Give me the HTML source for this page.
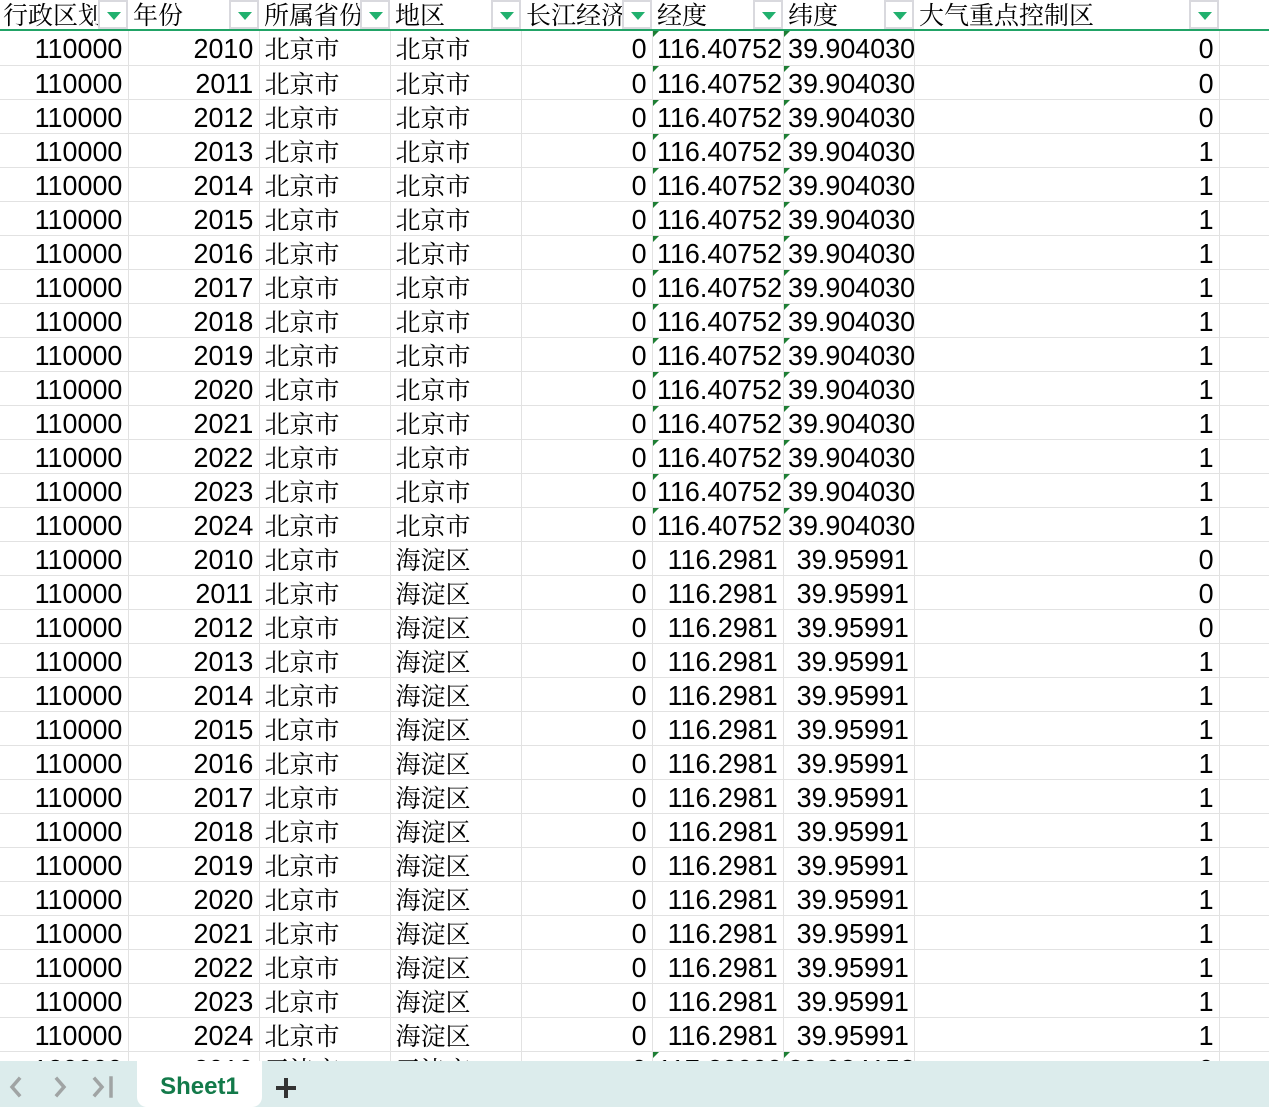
<!DOCTYPE html>
<html><head><meta charset="utf-8"><style>
*{margin:0;padding:0;box-sizing:border-box}
body{width:1269px;height:1107px;overflow:hidden;background:#fff;position:relative;font-family:"Liberation Sans","Noto Sans CJK SC",sans-serif;color:#000}
.hdr{position:absolute;left:0;top:0;height:31px;width:1269px;border-bottom:2px solid #21a366}
.h{position:absolute;top:0px;font-family:"Liberation Serif","Noto Serif CJK SC",serif;font-size:25px;white-space:nowrap;overflow:hidden;line-height:34px;height:29px}
.fb{position:absolute;top:0;width:30px;height:29px;border:2px solid #d9d9de;background:#fff}
.fb:after{content:"";position:absolute;left:7px;top:10px;border-left:7px solid transparent;border-right:7px solid transparent;border-top:8px solid #21b06e}
table{position:absolute;left:0;top:31px;width:1269px;border-collapse:collapse;table-layout:fixed}
td{height:34px;max-height:34px;border-right:1px solid #e2e2e2;border-bottom:1px solid #e2e2e2;white-space:nowrap;overflow:visible;font-size:28px;padding:0;line-height:33px;position:relative;vertical-align:middle}
td.r{text-align:right;padding-right:5px}
td.l{text-align:left;padding-left:4px}
td span{display:inline-block;transform:scaleX(.96);position:relative;top:1px}
td.r span{transform-origin:right center}
td.l span{transform-origin:left center}
td.c{font-family:"Liberation Serif","Noto Serif CJK SC",serif;font-size:25px;padding-left:5px}
td.c i{font-style:normal;position:relative;top:3px}
td.t:before{content:"";position:absolute;left:0;top:0;border-top:6px solid #1e7e34;border-right:6px solid transparent}
.tabs{position:absolute;left:0;top:1061px;width:1269px;height:46px;background:#dcecec;z-index:5}
.tab{position:absolute;left:137px;top:0;width:125px;height:46px;background:#fff;border-radius:0 0 10px 10px;text-align:center;font-weight:bold;color:#137a4a;font-size:24px;line-height:52px}
</style></head><body>
<div class="hdr">
<div class="h" style="left:3px;width:95px">行政区划</div><div class="fb" style="left:98px"></div>
<div class="h" style="left:133px;width:96px">年份</div><div class="fb" style="left:229px"></div>
<div class="h" style="left:264px;width:96px">所属省份</div><div class="fb" style="left:360px"></div>
<div class="h" style="left:395px;width:96px">地区</div><div class="fb" style="left:491px"></div>
<div class="h" style="left:526px;width:96px">长江经济</div><div class="fb" style="left:622px"></div>
<div class="h" style="left:657px;width:96px">经度</div><div class="fb" style="left:753px"></div>
<div class="h" style="left:788px;width:96px">纬度</div><div class="fb" style="left:884px"></div>
<div class="h" style="left:919px;width:260px">大气重点控制区</div><div class="fb" style="left:1189px"></div>
</div>
<table>
<colgroup><col style="width:128px"><col style="width:131px"><col style="width:131px"><col style="width:131px"><col style="width:131px"><col style="width:131px"><col style="width:131px"><col style="width:305px"><col style="width:50px"></colgroup>
<tr><td class="r"><span>110000</span></td><td class="r"><span>2010</span></td><td class="c"><i>北京市</i></td><td class="c"><i>北京市</i></td><td class="r"><span>0</span></td><td class="l t"><span>116.40752</span></td><td class="l t"><span>39.904030</span></td><td class="r"><span>0</span></td><td></td></tr>
<tr><td class="r"><span>110000</span></td><td class="r"><span>2011</span></td><td class="c"><i>北京市</i></td><td class="c"><i>北京市</i></td><td class="r"><span>0</span></td><td class="l t"><span>116.40752</span></td><td class="l t"><span>39.904030</span></td><td class="r"><span>0</span></td><td></td></tr>
<tr><td class="r"><span>110000</span></td><td class="r"><span>2012</span></td><td class="c"><i>北京市</i></td><td class="c"><i>北京市</i></td><td class="r"><span>0</span></td><td class="l t"><span>116.40752</span></td><td class="l t"><span>39.904030</span></td><td class="r"><span>0</span></td><td></td></tr>
<tr><td class="r"><span>110000</span></td><td class="r"><span>2013</span></td><td class="c"><i>北京市</i></td><td class="c"><i>北京市</i></td><td class="r"><span>0</span></td><td class="l t"><span>116.40752</span></td><td class="l t"><span>39.904030</span></td><td class="r"><span>1</span></td><td></td></tr>
<tr><td class="r"><span>110000</span></td><td class="r"><span>2014</span></td><td class="c"><i>北京市</i></td><td class="c"><i>北京市</i></td><td class="r"><span>0</span></td><td class="l t"><span>116.40752</span></td><td class="l t"><span>39.904030</span></td><td class="r"><span>1</span></td><td></td></tr>
<tr><td class="r"><span>110000</span></td><td class="r"><span>2015</span></td><td class="c"><i>北京市</i></td><td class="c"><i>北京市</i></td><td class="r"><span>0</span></td><td class="l t"><span>116.40752</span></td><td class="l t"><span>39.904030</span></td><td class="r"><span>1</span></td><td></td></tr>
<tr><td class="r"><span>110000</span></td><td class="r"><span>2016</span></td><td class="c"><i>北京市</i></td><td class="c"><i>北京市</i></td><td class="r"><span>0</span></td><td class="l t"><span>116.40752</span></td><td class="l t"><span>39.904030</span></td><td class="r"><span>1</span></td><td></td></tr>
<tr><td class="r"><span>110000</span></td><td class="r"><span>2017</span></td><td class="c"><i>北京市</i></td><td class="c"><i>北京市</i></td><td class="r"><span>0</span></td><td class="l t"><span>116.40752</span></td><td class="l t"><span>39.904030</span></td><td class="r"><span>1</span></td><td></td></tr>
<tr><td class="r"><span>110000</span></td><td class="r"><span>2018</span></td><td class="c"><i>北京市</i></td><td class="c"><i>北京市</i></td><td class="r"><span>0</span></td><td class="l t"><span>116.40752</span></td><td class="l t"><span>39.904030</span></td><td class="r"><span>1</span></td><td></td></tr>
<tr><td class="r"><span>110000</span></td><td class="r"><span>2019</span></td><td class="c"><i>北京市</i></td><td class="c"><i>北京市</i></td><td class="r"><span>0</span></td><td class="l t"><span>116.40752</span></td><td class="l t"><span>39.904030</span></td><td class="r"><span>1</span></td><td></td></tr>
<tr><td class="r"><span>110000</span></td><td class="r"><span>2020</span></td><td class="c"><i>北京市</i></td><td class="c"><i>北京市</i></td><td class="r"><span>0</span></td><td class="l t"><span>116.40752</span></td><td class="l t"><span>39.904030</span></td><td class="r"><span>1</span></td><td></td></tr>
<tr><td class="r"><span>110000</span></td><td class="r"><span>2021</span></td><td class="c"><i>北京市</i></td><td class="c"><i>北京市</i></td><td class="r"><span>0</span></td><td class="l t"><span>116.40752</span></td><td class="l t"><span>39.904030</span></td><td class="r"><span>1</span></td><td></td></tr>
<tr><td class="r"><span>110000</span></td><td class="r"><span>2022</span></td><td class="c"><i>北京市</i></td><td class="c"><i>北京市</i></td><td class="r"><span>0</span></td><td class="l t"><span>116.40752</span></td><td class="l t"><span>39.904030</span></td><td class="r"><span>1</span></td><td></td></tr>
<tr><td class="r"><span>110000</span></td><td class="r"><span>2023</span></td><td class="c"><i>北京市</i></td><td class="c"><i>北京市</i></td><td class="r"><span>0</span></td><td class="l t"><span>116.40752</span></td><td class="l t"><span>39.904030</span></td><td class="r"><span>1</span></td><td></td></tr>
<tr><td class="r"><span>110000</span></td><td class="r"><span>2024</span></td><td class="c"><i>北京市</i></td><td class="c"><i>北京市</i></td><td class="r"><span>0</span></td><td class="l t"><span>116.40752</span></td><td class="l t"><span>39.904030</span></td><td class="r"><span>1</span></td><td></td></tr>
<tr><td class="r"><span>110000</span></td><td class="r"><span>2010</span></td><td class="c"><i>北京市</i></td><td class="c"><i>海淀区</i></td><td class="r"><span>0</span></td><td class="r"><span>116.2981</span></td><td class="r"><span>39.95991</span></td><td class="r"><span>0</span></td><td></td></tr>
<tr><td class="r"><span>110000</span></td><td class="r"><span>2011</span></td><td class="c"><i>北京市</i></td><td class="c"><i>海淀区</i></td><td class="r"><span>0</span></td><td class="r"><span>116.2981</span></td><td class="r"><span>39.95991</span></td><td class="r"><span>0</span></td><td></td></tr>
<tr><td class="r"><span>110000</span></td><td class="r"><span>2012</span></td><td class="c"><i>北京市</i></td><td class="c"><i>海淀区</i></td><td class="r"><span>0</span></td><td class="r"><span>116.2981</span></td><td class="r"><span>39.95991</span></td><td class="r"><span>0</span></td><td></td></tr>
<tr><td class="r"><span>110000</span></td><td class="r"><span>2013</span></td><td class="c"><i>北京市</i></td><td class="c"><i>海淀区</i></td><td class="r"><span>0</span></td><td class="r"><span>116.2981</span></td><td class="r"><span>39.95991</span></td><td class="r"><span>1</span></td><td></td></tr>
<tr><td class="r"><span>110000</span></td><td class="r"><span>2014</span></td><td class="c"><i>北京市</i></td><td class="c"><i>海淀区</i></td><td class="r"><span>0</span></td><td class="r"><span>116.2981</span></td><td class="r"><span>39.95991</span></td><td class="r"><span>1</span></td><td></td></tr>
<tr><td class="r"><span>110000</span></td><td class="r"><span>2015</span></td><td class="c"><i>北京市</i></td><td class="c"><i>海淀区</i></td><td class="r"><span>0</span></td><td class="r"><span>116.2981</span></td><td class="r"><span>39.95991</span></td><td class="r"><span>1</span></td><td></td></tr>
<tr><td class="r"><span>110000</span></td><td class="r"><span>2016</span></td><td class="c"><i>北京市</i></td><td class="c"><i>海淀区</i></td><td class="r"><span>0</span></td><td class="r"><span>116.2981</span></td><td class="r"><span>39.95991</span></td><td class="r"><span>1</span></td><td></td></tr>
<tr><td class="r"><span>110000</span></td><td class="r"><span>2017</span></td><td class="c"><i>北京市</i></td><td class="c"><i>海淀区</i></td><td class="r"><span>0</span></td><td class="r"><span>116.2981</span></td><td class="r"><span>39.95991</span></td><td class="r"><span>1</span></td><td></td></tr>
<tr><td class="r"><span>110000</span></td><td class="r"><span>2018</span></td><td class="c"><i>北京市</i></td><td class="c"><i>海淀区</i></td><td class="r"><span>0</span></td><td class="r"><span>116.2981</span></td><td class="r"><span>39.95991</span></td><td class="r"><span>1</span></td><td></td></tr>
<tr><td class="r"><span>110000</span></td><td class="r"><span>2019</span></td><td class="c"><i>北京市</i></td><td class="c"><i>海淀区</i></td><td class="r"><span>0</span></td><td class="r"><span>116.2981</span></td><td class="r"><span>39.95991</span></td><td class="r"><span>1</span></td><td></td></tr>
<tr><td class="r"><span>110000</span></td><td class="r"><span>2020</span></td><td class="c"><i>北京市</i></td><td class="c"><i>海淀区</i></td><td class="r"><span>0</span></td><td class="r"><span>116.2981</span></td><td class="r"><span>39.95991</span></td><td class="r"><span>1</span></td><td></td></tr>
<tr><td class="r"><span>110000</span></td><td class="r"><span>2021</span></td><td class="c"><i>北京市</i></td><td class="c"><i>海淀区</i></td><td class="r"><span>0</span></td><td class="r"><span>116.2981</span></td><td class="r"><span>39.95991</span></td><td class="r"><span>1</span></td><td></td></tr>
<tr><td class="r"><span>110000</span></td><td class="r"><span>2022</span></td><td class="c"><i>北京市</i></td><td class="c"><i>海淀区</i></td><td class="r"><span>0</span></td><td class="r"><span>116.2981</span></td><td class="r"><span>39.95991</span></td><td class="r"><span>1</span></td><td></td></tr>
<tr><td class="r"><span>110000</span></td><td class="r"><span>2023</span></td><td class="c"><i>北京市</i></td><td class="c"><i>海淀区</i></td><td class="r"><span>0</span></td><td class="r"><span>116.2981</span></td><td class="r"><span>39.95991</span></td><td class="r"><span>1</span></td><td></td></tr>
<tr><td class="r"><span>110000</span></td><td class="r"><span>2024</span></td><td class="c"><i>北京市</i></td><td class="c"><i>海淀区</i></td><td class="r"><span>0</span></td><td class="r"><span>116.2981</span></td><td class="r"><span>39.95991</span></td><td class="r"><span>1</span></td><td></td></tr>
<tr><td class="r"><span>120000</span></td><td class="r"><span>2010</span></td><td class="c"><i>天津市</i></td><td class="c"><i>天津市</i></td><td class="r"><span>0</span></td><td class="l t"><span>117.20000</span></td><td class="l t"><span>39.084158</span></td><td class="r"><span>0</span></td><td></td></tr>
</table>
<div class="tabs">
<svg width="130" height="46" style="position:absolute;left:0;top:0" fill="none" stroke="#a0a4a4" stroke-width="3.5" stroke-linecap="square">
<polyline points="19,18 12,26 19,34"/>
<polyline points="57,18 64,26 57,34"/>
<polyline points="95,18 102,26 95,34"/>
<line x1="111" y1="17" x2="111" y2="35"/>
</svg>
<div class="tab">Sheet1</div>
<div style="position:absolute;left:276px;top:25px;width:20px;height:4px;background:#333"></div>
<div style="position:absolute;left:284px;top:17px;width:4px;height:20px;background:#333"></div>
</div>
</body></html>
